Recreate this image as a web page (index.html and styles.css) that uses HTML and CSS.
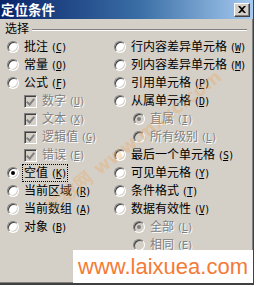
FILE: index.html
```html
<!DOCTYPE html>
<html>
<head>
<meta charset="utf-8">
<link rel="stylesheet" href="styles.css">
</head>
<body>
<div class="win">
  <div class="titlebar">
    <span class="title">定位条件</span>
    <span class="close"><svg width="8" height="7" viewBox="0 0 8 7"><path d="M0 0h2l2 2 2-2h2L5 3.5 8 7H6L4 5 2 7H0l3-3.5z" fill="#000"/></svg></span>
  </div>
  <div class="body">
    <div class="group-head"><span class="glabel">选择</span><span class="gline"></span></div>
    <div class="cols">
      <div class="col left">
        <div class="row"><span class="radio"></span><span class="lbl">批注 <span class="acc">(<u>C</u>)</span></span></div>
        <div class="row"><span class="radio"></span><span class="lbl">常量 <span class="acc">(<u>O</u>)</span></span></div>
        <div class="row"><span class="radio"></span><span class="lbl">公式 <span class="acc">(<u>F</u>)</span></span></div>
        <div class="row sub dis"><span class="check"></span><span class="lbl">数字 <span class="acc">(<u>U</u>)</span></span></div>
        <div class="row sub dis"><span class="check"></span><span class="lbl">文本 <span class="acc">(<u>X</u>)</span></span></div>
        <div class="row sub dis"><span class="check"></span><span class="lbl">逻辑值 <span class="acc">(<u>G</u>)</span></span></div>
        <div class="row sub dis"><span class="check"></span><span class="lbl">错误 <span class="acc">(<u>E</u>)</span></span></div>
        <div class="row"><span class="radio on"></span><span class="lbl focus">空值 <span class="acc">(<u>K</u>)</span></span></div>
        <div class="row"><span class="radio"></span><span class="lbl">当前区域 <span class="acc">(<u>R</u>)</span></span></div>
        <div class="row"><span class="radio"></span><span class="lbl">当前数组 <span class="acc">(<u>A</u>)</span></span></div>
        <div class="row"><span class="radio"></span><span class="lbl">对象 <span class="acc">(<u>B</u>)</span></span></div>
      </div>
      <div class="col right">
        <div class="row"><span class="radio"></span><span class="lbl">行内容差异单元格 <span class="acc">(<u>W</u>)</span></span></div>
        <div class="row"><span class="radio"></span><span class="lbl">列内容差异单元格 <span class="acc">(<u>M</u>)</span></span></div>
        <div class="row"><span class="radio"></span><span class="lbl">引用单元格 <span class="acc">(<u>P</u>)</span></span></div>
        <div class="row"><span class="radio"></span><span class="lbl">从属单元格 <span class="acc">(<u>D</u>)</span></span></div>
        <div class="row sub2 dis"><span class="radio on"></span><span class="lbl">直属 <span class="acc">(<u>I</u>)</span></span></div>
        <div class="row sub2 dis"><span class="radio"></span><span class="lbl">所有级别 <span class="acc">(<u>L</u>)</span></span></div>
        <div class="row"><span class="radio"></span><span class="lbl">最后一个单元格 <span class="acc">(<u>S</u>)</span></span></div>
        <div class="row"><span class="radio"></span><span class="lbl">可见单元格 <span class="acc">(<u>Y</u>)</span></span></div>
        <div class="row"><span class="radio"></span><span class="lbl">条件格式 <span class="acc">(<u>T</u>)</span></span></div>
        <div class="row"><span class="radio"></span><span class="lbl">数据有效性 <span class="acc">(<u>V</u>)</span></span></div>
        <div class="row sub2 dis"><span class="radio on"></span><span class="lbl">全部 <span class="acc">(<u>L</u>)</span></span></div>
        <div class="row sub2 dis"><span class="radio"></span><span class="lbl">相同 <span class="acc">(<u>E</u>)</span></span></div>
      </div>
    </div>
  </div>
  <div class="diag">学教网 www.mxxc.com</div>
  <div class="stamp">www.laixuea.com</div>
</div>
</body>
</html>
```
FILE: styles.css
```css
html, body {
  margin: 0;
  padding: 0;
  background: #ffffff;
}
body {
  width: 257px;
  height: 287px;
  overflow: hidden;
  font-family: "Noto Sans CJK SC", "DejaVu Sans", sans-serif;
  font-size: 12px;
  color: #000;
}
.win {
  position: relative;
  width: 253px;
  height: 283px;
  background: #d4d0c8;
  border-right: 1px solid #404040;
  border-bottom: 2px solid #404040;
  box-shadow: inset -1px -1px 0 #808080;
  overflow: hidden;
}
.titlebar {
  height: 19px;
  display: flex;
  align-items: center;
  justify-content: space-between;
  padding: 0 3px 0 1px;
  background: linear-gradient(to right, #0a246a 0%, #3a6ea5 55%, #a6caf0 100%);
}
.title {
  color: #fff;
  font-weight: bold;
  font-size: 13.5px;
  line-height: 19px;
}
.close {
  width: 16px;
  height: 14px;
  box-sizing: border-box;
  background: #d4d0c8;
  border-top: 1px solid #fff;
  border-left: 1px solid #fff;
  border-right: 1px solid #404040;
  border-bottom: 1px solid #404040;
  box-shadow: inset -1px -1px 0 #808080;
  display: flex;
  align-items: center;
  justify-content: center;
}
.group-head {
  display: flex;
  align-items: center;
  height: 18px;
  padding-left: 5px;
  padding-right: 6px;
}
.glabel {
  line-height: 18px;
  padding-right: 3px;
}
.gline {
  flex: 1;
  height: 0;
  border-top: 1px solid #808080;
  border-bottom: 1px solid #fff;
  margin-top: 3px;
}
.cols {
  display: flex;
  padding-left: 7px;
  margin-top: 1px;
}
.col {
  display: flex;
  flex-direction: column;
}
.col.left {
  width: 107px;
}
.row {
  height: 18px;
  display: flex;
  align-items: center;
  white-space: nowrap;
}
.row.sub {
  padding-left: 17px;
}
.row.sub2 {
  padding-left: 19px;
}
.lbl {
  margin-left: 4px;
  line-height: 14px;
  padding: 0 1px;
}
.acc {
  font-family: "DejaVu Sans Mono", "Liberation Mono", monospace;
  font-size: 10px;
  letter-spacing: -0.8px;
}
.focus {
  outline: 1px dotted #000;
  outline-offset: 0;
}
.radio {
  width: 12px;
  height: 12px;
  box-sizing: border-box;
  border-radius: 50%;
  border: 1px solid;
  border-color: #808080 #fff #fff #808080;
  background: #fff;
  box-shadow: inset 1px 1px 0 #404040, inset -1px -1px 0 #d4d0c8;
  display: flex;
  align-items: center;
  justify-content: center;
  flex: none;
}
.radio.on::after {
  content: "";
  width: 4px;
  height: 4px;
  border-radius: 50%;
  background: #000;
}
.check {
  width: 13px;
  height: 13px;
  box-sizing: border-box;
  border: 1px solid;
  border-color: #808080 #fff #fff #808080;
  box-shadow: inset 1px 1px 0 #404040, inset -1px -1px 0 #d4d0c8;
  background: #d4d0c8;
  position: relative;
  flex: none;
}
.check::after {
  content: "";
  position: absolute;
  left: 3px;
  top: 1px;
  width: 3px;
  height: 6px;
  border-right: 2px solid #808080;
  border-bottom: 2px solid #808080;
  transform: rotate(40deg);
}
.dis .lbl {
  color: #808080;
  text-shadow: 1px 1px 0 #fff;
}
.dis .radio {
  background: #d4d0c8;
}
.dis .radio.on::after {
  background: #808080;
}
.diag {
  position: absolute;
  left: 48px;
  top: 196px;
  transform: rotate(-38deg);
  transform-origin: left center;
  font-family: "DejaVu Sans", sans-serif;
  font-weight: bold;
  font-size: 18px;
  color: #f0a050;
  opacity: 0.3;
  white-space: nowrap;
  pointer-events: none;
}
.stamp {
  position: absolute;
  left: 73px;
  top: 250px;
  width: 180px;
  height: 33px;
  background: #fff;
  color: #f57a36;
  font-family: "Liberation Sans", sans-serif;
  font-size: 22px;
  line-height: 33px;
  text-align: center;
}
```
